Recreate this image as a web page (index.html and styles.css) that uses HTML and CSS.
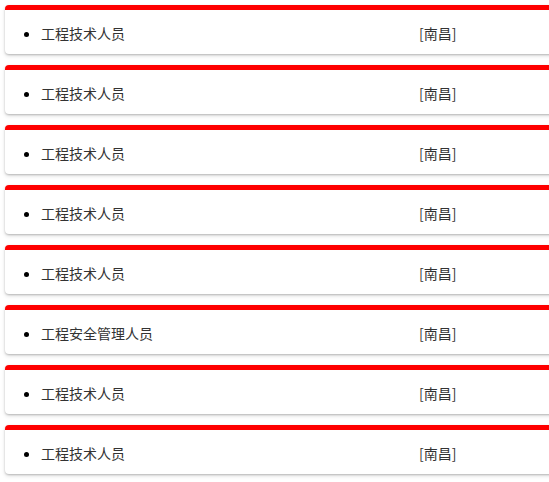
FILE: index.html
```html
<!DOCTYPE html>
<html lang="zh">
<head>
<meta charset="utf-8">
<link rel="stylesheet" href="styles.css">
</head>
<body>
<div class="clip">
<div class="list">
  <div class="card"><ul class="row"><li><span class="name">工程技术人员</span><span class="city">[南昌]</span></li></ul></div>
  <div class="card"><ul class="row"><li><span class="name">工程技术人员</span><span class="city">[南昌]</span></li></ul></div>
  <div class="card"><ul class="row"><li><span class="name">工程技术人员</span><span class="city">[南昌]</span></li></ul></div>
  <div class="card"><ul class="row"><li><span class="name">工程技术人员</span><span class="city">[南昌]</span></li></ul></div>
  <div class="card"><ul class="row"><li><span class="name">工程技术人员</span><span class="city">[南昌]</span></li></ul></div>
  <div class="card"><ul class="row"><li><span class="name">工程安全管理人员</span><span class="city">[南昌]</span></li></ul></div>
  <div class="card"><ul class="row"><li><span class="name">工程技术人员</span><span class="city">[南昌]</span></li></ul></div>
  <div class="card"><ul class="row"><li><span class="name">工程技术人员</span><span class="city">[南昌]</span></li></ul></div>
</div>
</div>
</body>
</html>
```
FILE: styles.css
```css
html, body {
  margin: 0;
  padding: 0;
  background: #fff;
}
body {
  font-family: "Noto Sans CJK SC", "Liberation Sans", sans-serif;
  font-size: 14px;
  color: #333;
}
.clip {
  width: 100%;
  height: 482px;
  overflow: hidden;
}
.list {
  padding: 5px 0 0 5px;
  margin-right: -40px;
  display: flex;
  flex-direction: column;
  gap: 11px;
}
.card {
  background: #fff;
  border-top: 5px solid #f00;
  border-radius: 4px;
  box-shadow: 0 1px 2px rgba(0, 0, 0, 0.2), 0 2px 4px rgba(0, 0, 0, 0.12);
  height: 44px;
}
.row {
  margin: 0;
  padding: 12px 0 0 36px;
  list-style: disc;
}
.row li {
  line-height: 22px;
  color: #000;
}
.name {
  display: inline-block;
  width: 378px;
  color: #333;
}
.city {
  color: #333;
}
```
